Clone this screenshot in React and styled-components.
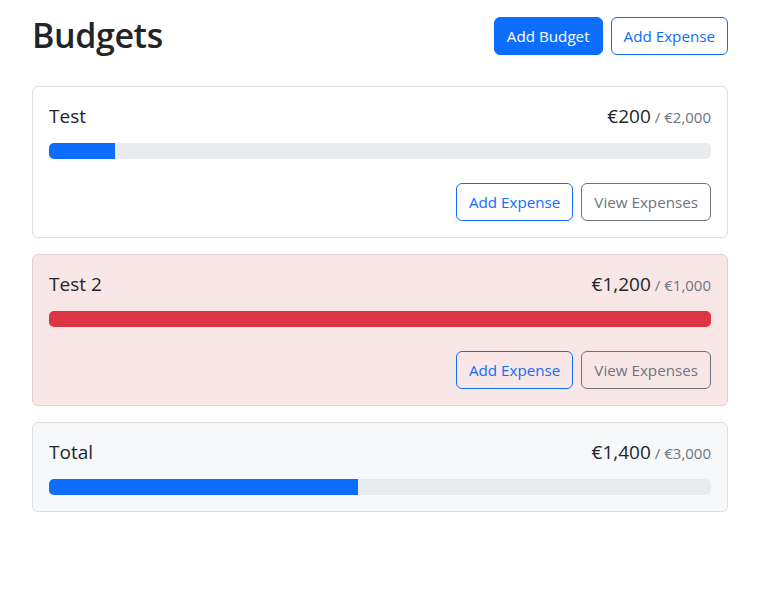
import React from 'react'
import styled, { createGlobalStyle } from 'styled-components'

const GlobalStyle = createGlobalStyle`
    body {
        margin: 0;
        background: #fff;
        color: #212529;
        font-family: "Open Sans", "Noto Sans", sans-serif;
    }
`

const budgets = [
    { id: 1, name: 'Test', amount: 200, max: 2000, actions: true },
    { id: 2, name: 'Test 2', amount: 1200, max: 1000, actions: true },
]

const euro = (n) => '€' + n.toLocaleString('en-US')

const BudgetCard = ({ name, amount, max, actions, variant }) => {
    const ratio = Math.min(amount / max, 1)
    const over = amount > max
    return (
        <Card variant={over ? 'danger' : variant}>
            <TitleRow>
                <Name>{name}</Name>
                <Amount>
                    {euro(amount)}
                    <Max>/ {euro(max)}</Max>
                </Amount>
            </TitleRow>
            <Progress>
                <Bar danger={over} style={{ width: `${ratio * 100}%` }} />
            </Progress>
            {actions && (
                <Actions>
                    <Button variant="outline-primary">Add Expense</Button>
                    <Button variant="outline-secondary">View Expenses</Button>
                </Actions>
            )}
        </Card>
    )
}

const App = () => {
    const total = budgets.reduce((s, b) => s + b.amount, 0)
    const totalMax = budgets.reduce((s, b) => s + b.max, 0)
    return (
        <>
            <GlobalStyle />
            <Container>
                <Header>
                    <Title>Budgets</Title>
                    <Button variant="primary">Add Budget</Button>
                    <Button variant="outline-primary">Add Expense</Button>
                </Header>
                <Grid>
                    {budgets.map(b => (
                        <BudgetCard key={b.id} {...b} />
                    ))}
                    <BudgetCard name="Total" amount={total} max={totalMax} variant="light" />
                </Grid>
            </Container>
        </>
    )
}

const Container = styled.div`
    width: 696px;
    margin: 17px 0 0 32px;
`

const Header = styled.div`
    display: flex;
    align-items: center;
    gap: 8px;
    height: 38px;
    margin-bottom: 31px;
`

const Title = styled.h1`
    margin: 0 auto 2px 0;
    font-size: 34px;
    font-weight: 600;
    line-height: 1.2;
    letter-spacing: -0.4px;
`

const variants = {
    primary: 'background:#0d6efd;border-color:#0d6efd;color:#fff;',
    'outline-primary': 'background:transparent;border-color:#0d6efd;color:#0d6efd;',
    'outline-secondary': 'background:transparent;border-color:#6c757d;color:#6c757d;',
}

const Button = styled.button`
    font-family: inherit;
    font-size: 15.2px;
    line-height: 24px;
    padding: 6px 12px;
    border: 1px solid;
    border-radius: 6px;
    cursor: pointer;
    ${p => variants[p.variant]}
`

const Grid = styled.div`
    display: flex;
    flex-direction: column;
    gap: 16px;
`

const Card = styled.div`
    border: 1px solid ${p => p.variant === 'danger' ? '#e6cdcf' : '#dcdfe2'};
    border-radius: 6px;
    padding: 16px;
    background: ${p => p.variant === 'danger' ? '#f9e7e8' : p.variant === 'light' ? '#f7f8fa' : '#fff'};
`

const TitleRow = styled.div`
    display: flex;
    justify-content: space-between;
    align-items: baseline;
    height: 24px;
    margin-bottom: 16px;
    padding-top: 1px;
    box-sizing: border-box;
    font-size: 19px;
    line-height: 24px;
`

const Name = styled.div``

const Amount = styled.div`
    display: flex;
    align-items: baseline;
`

const Max = styled.span`
    margin-left: 4px;
    font-size: 15px;
    color: #6c757d;
`

const Progress = styled.div`
    height: 16px;
    border-radius: 5px;
    background: #e9ecef;
    overflow: hidden;
`

const Bar = styled.div`
    height: 100%;
    background: ${p => p.danger ? '#dc3545' : '#0d6efd'};
`

const Actions = styled.div`
    display: flex;
    justify-content: flex-end;
    gap: 8px;
    margin-top: 24px;
`

export default App
